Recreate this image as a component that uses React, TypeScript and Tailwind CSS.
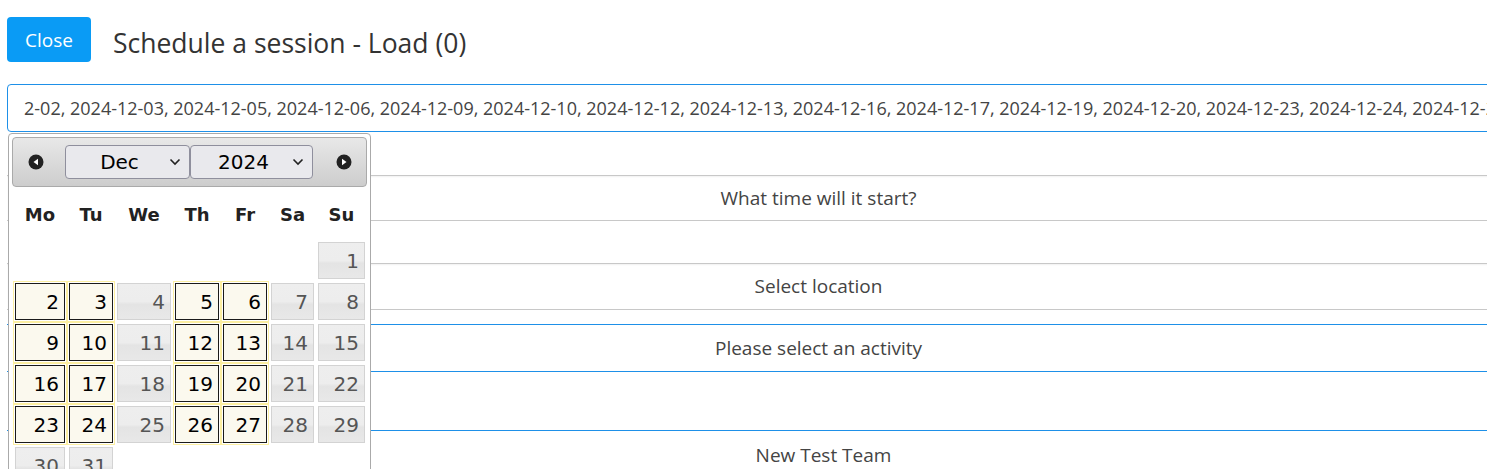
import React from "react";

// ─── Data ─────────────────────────────────────────────────────────────────────

const DAY_NAMES = ["Mo", "Tu", "We", "Th", "Fr", "Sa", "Su"];

// null = empty slot, [day, available]
type Cell = null | [number, boolean];

const AVAILABLE = new Set([2, 3, 5, 6, 9, 10, 12, 13, 16, 17, 19, 20, 23, 24, 26, 27]);

const WEEKS: Cell[][] = (() => {
  const cells: Cell[] = [null, null, null, null, null, null];
  for (let d = 1; d <= 31; d++) cells.push([d, AVAILABLE.has(d)]);
  while (cells.length % 7) cells.push(null);
  const rows: Cell[][] = [];
  for (let i = 0; i < cells.length; i += 7) rows.push(cells.slice(i, i + 7));
  return rows;
})();

const PICKED =
  "2-02, 2024-12-03, 2024-12-05, 2024-12-06, 2024-12-09, 2024-12-10, 2024-12-12, 2024-12-13, 2024-12-16, 2024-12-17, 2024-12-19, 2024-12-20, 2024-12-23, 2024-12-24, 2024-12-26, 2024-12-27";

const GRID = "grid grid-cols-[50px_44px_54px_44px_44px_43px_47px] gap-x-[4px]";

// ─── Little drawings ──────────────────────────────────────────────────────────

function NavIcon({ dir }: { dir: "prev" | "next" }) {
  return (
    <svg width="16" height="16" viewBox="0 0 16 16" className="shrink-0">
      <circle cx="8" cy="8" r="7.5" fill="#222" />
      {dir === "prev" ? (
        <path d="M5.5 8 L10 4.8 L10 11.2 Z" fill="#fff" />
      ) : (
        <path d="M10.5 8 L6 4.8 L6 11.2 Z" fill="#fff" />
      )}
    </svg>
  );
}

function FakeSelect({ label, width }: { label: string; width: string }) {
  return (
    <div
      className={`${width} flex h-[34px] items-center rounded-[4px] border border-[#8f8f9d] bg-[#e9e9ed] text-[20px] text-black`}
    >
      <span className="flex-1 pl-[4px] text-center">{label}</span>
      <svg width="12" height="8" viewBox="0 0 12 8" className="mr-[8px] shrink-0">
        <path d="M1.5 1.5 L6 6 L10.5 1.5" fill="none" stroke="#222" strokeWidth="1.6" />
      </svg>
    </div>
  );
}

// ─── Datepicker ───────────────────────────────────────────────────────────────

function DayCell({ cell }: { cell: Cell }) {
  if (!cell) return <div />;
  const [day, open] = cell;
  return open ? (
    <div className="flex h-[37px] items-center justify-end border border-[#1a1a1a] bg-[#fbf9ee] pr-[5px] text-black outline outline-1 outline-offset-[1px] outline-[#fcefa1]">
      {day}
    </div>
  ) : (
    <div className="flex h-[37px] items-center justify-end border border-[#d3d3d3] bg-[linear-gradient(to_bottom,#eeeeee_0%,#ededed_50%,#e4e4e4_58%,#e8e8e8_100%)] pr-[5px] text-[#555555]">
      {day}
    </div>
  );
}

function Datepicker() {
  return (
    <div
      className="absolute left-[8px] top-[133px] h-[400px] w-[363px] rounded-[4px] border border-[#aaaaaa] bg-white p-[3px]"
      style={{ fontFamily: '"DejaVu Sans", Verdana, sans-serif' }}
    >
      <div className="flex h-[50px] items-center rounded-[4px] border border-[#aaaaaa] bg-[linear-gradient(to_bottom,#e8e8e8,#cdcdcd)] pl-[15px]">
        <NavIcon dir="prev" />
        <div className="ml-[21px] flex">
          <FakeSelect label="Dec" width="w-[125px]" />
          <FakeSelect label="2024" width="w-[123px]" />
        </div>
        <div className="ml-[23px]">
          <NavIcon dir="next" />
        </div>
      </div>

      <div className="pl-[3px]">
        <div className={`${GRID} h-[55px] items-center text-[18px] font-bold text-[#222222]`}>
          {DAY_NAMES.map((d) => (
            <div key={d} className="text-center">
              {d}
            </div>
          ))}
        </div>
        <div className="flex flex-col gap-y-[4px] text-[20px]">
          {WEEKS.map((week, i) => (
            <div key={i} className={GRID}>
              {week.map((c, j) => (
                <DayCell key={j} cell={c} />
              ))}
            </div>
          ))}
        </div>
      </div>
    </div>
  );
}

// ─── Page ─────────────────────────────────────────────────────────────────────

function FieldBox({ label, blue, className }: { label?: string; blue?: boolean; className: string }) {
  return (
    <div
      className={`flex items-center justify-center border border-l-0 bg-white text-[19px] text-[#444444] ${
        blue ? "border-[#1e90e8]" : "border-[#c8c8c8] shadow-[inset_0_1px_2px_rgba(0,0,0,0.06)]"
      } ${className}`}
    >
      {label}
    </div>
  );
}

export default function App() {
  return (
    <div
      className="relative h-[469px] w-full overflow-hidden bg-white"
      style={{ fontFamily: '"Open Sans", "Noto Sans", sans-serif' }}
    >
      <div className="ml-[7px] w-[1624px]">
        <div className="flex h-[62px] items-start pt-[17px]">
          <button
            type="button"
            className="h-[45px] w-[84px] rounded-[4px] bg-[#0a9bf5] pt-[2px] text-[19px] text-white"
          >
            Close
          </button>
          <h1 className="ml-[22px] mt-[8px] text-[26.5px] leading-[36px] text-[#333333]">
            Schedule a session - Load (0)
          </h1>
        </div>

        <div className="mt-[22px] flex h-[48px] items-center overflow-hidden whitespace-nowrap rounded-l-[4px] border border-[#1e90e8] pl-[16px] text-[18px] text-[#444444]">
          {PICKED}
        </div>

        <FieldBox label="What time will it start?" className="mt-[43px] h-[46px]" />
        <FieldBox className="mt-[42px] h-[47px]" label="Select location" />
        <FieldBox blue className="mt-[14px] h-[48px]" label="Please select an activity" />
        <FieldBox blue className="mt-[58px] h-[50px] pl-[10px]" label="New Test Team" />
      </div>

      <Datepicker />
    </div>
  );
}
